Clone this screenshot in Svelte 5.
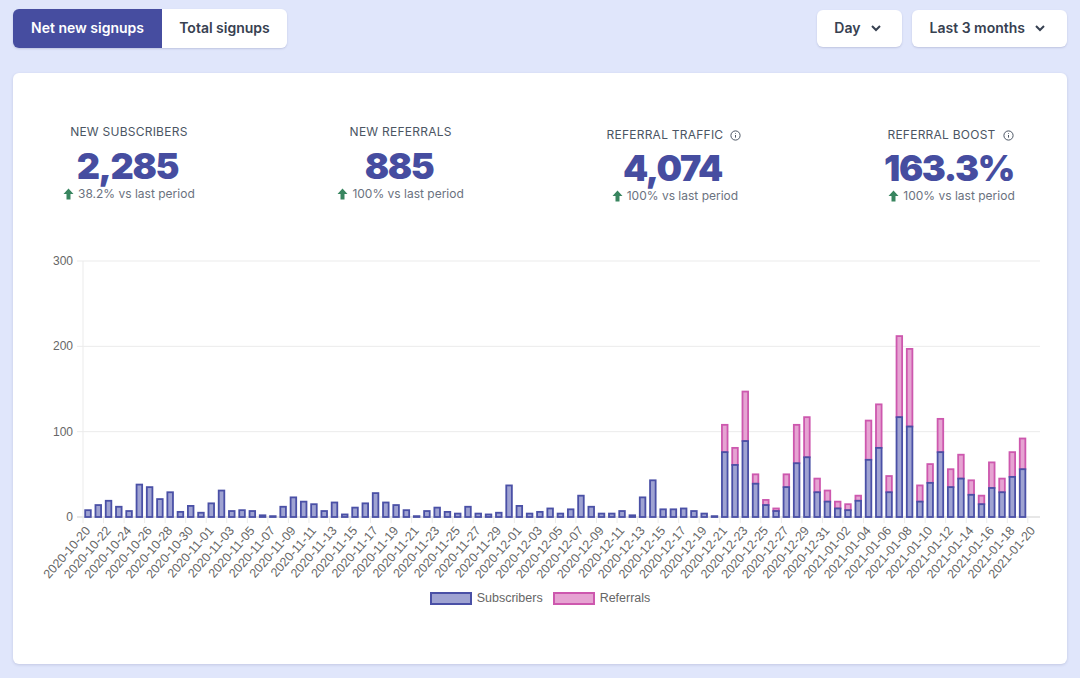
<script lang="ts">
  // chart geometry, in svg coordinates (svg starts at the card's left edge)
  const plotLeft = 70;
  const plotRight = 1027;
  const plotTop = 12;
  const plotBottom = 268;
  const step = 10.27;
  const barWidth = 5.6;
  const perUnit = (plotBottom - plotTop) / 300;

  const subscribers = [
    8, 14, 19, 12, 7, 38, 35, 21, 29, 6, 13, 5, 16, 31, 7, 8, 7, 2, 1, 12, 23, 18, 15, 7, 17, 3, 11, 16, 28, 17, 14, 8,
    1, 7, 11, 6, 4, 12, 4, 3, 5, 37, 13, 4, 6, 10, 4, 9, 25, 12, 4, 4, 7, 2, 23, 43, 9, 9, 10, 7, 4, 1,
    76, 61, 89, 39, 14, 7, 35, 63, 70, 29, 18, 10, 8, 19, 67, 81, 29, 117, 106, 18, 40, 76, 35, 45, 26, 15, 34, 29, 47, 56,
  ];

  // totals for the stretch of days that also have referrals, from index 62
  const totals = [
    108, 81, 147, 50, 20, 10, 50, 108, 117, 45, 31, 18, 15, 25, 113, 132, 48, 212, 197, 37, 62, 115, 56, 73, 43, 25, 64, 45, 76, 92,
  ];

  const y = (v: number) => plotBottom - v * perUnit;
  const barX = (i: number) => plotLeft + 5 + i * step - barWidth / 2;

  const bars = subscribers.map((sub, i) => ({
    x: barX(i),
    sub,
    total: i >= 62 ? totals[i - 62] : sub,
  }));

  function dayLabel(i: number) {
    const d = new Date(Date.UTC(2020, 9, 20 + i));
    return d.toISOString().slice(0, 10);
  }

  const ticks = Array.from({ length: 47 }, (_, k) => k * 2);

  const stats = [
    { label: "NEW SUBSCRIBERS", value: "2,285", delta: "38.2% vs last period", info: false },
    { label: "NEW REFERRALS", value: "885", delta: "100% vs last period", info: false },
    { label: "REFERRAL TRAFFIC", value: "4,074", delta: "100% vs last period", info: true },
    { label: "REFERRAL BOOST", value: "163.3%", delta: "100% vs last period", info: true },
  ];
</script>

<div class="page">
  <header class="toolbar">
    <div class="tabs">
      <button class="tab tab--active">Net new signups</button>
      <button class="tab">Total signups</button>
    </div>
    <div class="filters">
      <button class="select">
        Day
        <svg width="10" height="10" viewBox="0 0 10 10" aria-hidden="true"><path d="M1 3l4 4 4-4" /></svg>
      </button>
      <button class="select">
        Last 3 months
        <svg width="10" height="10" viewBox="0 0 10 10" aria-hidden="true"><path d="M1 3l4 4 4-4" /></svg>
      </button>
    </div>
  </header>

  <section class="card">
    <div class="stats">
      {#each stats as stat}
        <div class="stat" class:stat--info={stat.info}>
          <div class="stat__label">
            {stat.label}
            {#if stat.info}
              <svg class="info" width="11" height="11" viewBox="0 0 11 11" aria-hidden="true">
                <circle cx="5.5" cy="5.5" r="4.6" />
                <path d="M5.5 5v2.6M5.5 3.1v.7" />
              </svg>
            {/if}
          </div>
          <div class="stat__value">{stat.value}</div>
          <div class="stat__delta">
            <svg width="11" height="12" viewBox="0 0 11 12" aria-hidden="true"><path d="M5.5 0.5L10.5 6H7.5V11.5H3.5V6H0.5z" /></svg>
            {stat.delta}
          </div>
        </div>
      {/each}
    </div>

    <svg class="chart" width="1054" height="342" viewBox="0 0 1054 342">
      {#each [0, 100, 200, 300] as v}
        <line class={v === 0 ? "axis" : "grid"} x1={plotLeft - 6} x2={plotRight} y1={y(v)} y2={y(v)} />
        <text class="tick-y" x={plotLeft - 10} y={y(v) + 4}>{v}</text>
      {/each}
      <line class="grid" x1={plotLeft} x2={plotLeft} y1={plotTop} y2={plotBottom} />
      {#each ticks as k}
        <line class="grid" x1={plotLeft + k * step} x2={plotLeft + k * step} y1={plotBottom} y2={plotBottom + 6} />
        <text
          class="tick-x"
          transform="translate({plotLeft + 8 + k * step} {plotBottom + 14}) rotate(-49)"
        >{dayLabel(k)}</text>
      {/each}
      {#each bars as bar}
        {#if bar.total > bar.sub}
          <rect class="bar-ref" x={bar.x} y={y(bar.total)} width={barWidth} height={(bar.total - bar.sub) * perUnit} />
        {/if}
        <rect class="bar-sub" x={bar.x} y={y(bar.sub)} width={barWidth} height={bar.sub * perUnit} />
      {/each}
    </svg>

    <div class="legend">
      <span class="legend__item"><i class="swatch swatch--sub"></i>Subscribers</span>
      <span class="legend__item"><i class="swatch swatch--ref"></i>Referrals</span>
    </div>
  </section>
</div>

<style>
  :global(body) {
    margin: 0;
    background: #e0e6fb;
  }

  .page {
    height: 678px;
    box-sizing: border-box;
    padding: 9px 13px 14px;
    font-family: Inter, "Liberation Sans", sans-serif;
    overflow: hidden;
  }

  .toolbar {
    display: flex;
    justify-content: space-between;
    align-items: flex-start;
    height: 64px;
  }

  .tabs {
    display: flex;
    height: 39px;
    border-radius: 6px;
    box-shadow: 0 1px 2px rgba(60, 66, 120, 0.2);
  }

  button {
    font: inherit;
    font-size: 14px;
    font-weight: 600;
    line-height: 17px;
    color: #374151;
    background: #fff;
    border: 0;
    padding: 0;
    cursor: pointer;
  }

  .tab {
    height: 39px;
    width: 125px;
    padding-bottom: 2px;
    border-radius: 0 6px 6px 0;
  }

  .tab--active {
    width: 149px;
    color: #fff;
    background: #464da0;
    border-radius: 6px 0 0 6px;
  }

  .filters {
    display: flex;
    gap: 10px;
    margin-top: 1px;
  }

  .select {
    display: flex;
    align-items: center;
    gap: 10px;
    height: 37px;
    padding: 0 21px 2px 17px;
    border-radius: 6px;
    box-shadow: 0 1px 2px rgba(60, 66, 120, 0.2);
  }

  .select:last-child {
    padding: 0 22px 2px 18px;
  }

  .select path {
    fill: none;
    stroke: #374151;
    stroke-width: 2;
  }

  .card {
    height: 591px;
    background: #fff;
    border-radius: 6px;
    box-shadow: 0 1px 3px rgba(60, 66, 120, 0.18);
    overflow: hidden;
  }

  .stats {
    display: flex;
    justify-content: space-between;
    align-items: flex-start;
    height: 85px;
    padding: 51px 50px 0;
  }

  .stat {
    display: flex;
    flex-direction: column;
    align-items: center;
  }

  .stat--info {
    padding-top: 3px;
  }

  .stat--info .stat__value {
    margin-top: 9px;
  }

  .stat--info .stat__delta {
    padding-left: 2px;
  }

  .stat__label {
    display: flex;
    align-items: center;
    gap: 7px;
    height: 16px;
    font-size: 12px;
    letter-spacing: 0.02em;
    line-height: 16px;
    color: #4b5563;
  }

  .info circle,
  .info path {
    fill: none;
    stroke: #4b5563;
    stroke-width: 1;
  }

  .stat__value {
    margin-top: 10px;
    padding-right: 3px;
    font-size: 36px;
    font-weight: 900;
    letter-spacing: -1.4px;
    line-height: 32px;
    color: #464da0;
  }

  .stat__delta {
    display: flex;
    align-items: center;
    gap: 4px;
    margin-top: 4px;
    font-size: 12px;
    line-height: 16px;
    color: #6b7280;
  }

  .stat__delta path {
    fill: #38855f;
  }

  .chart {
    display: block;
    margin-top: 40px;
    font-family: "Liberation Sans", Arial, sans-serif;
  }

  .grid {
    stroke: #ebebeb;
    stroke-width: 1;
  }

  .axis {
    stroke: #cfcfcf;
    stroke-width: 1;
  }

  .tick-y {
    font-size: 12px;
    fill: #666;
    text-anchor: end;
  }

  .tick-x {
    font-size: 12.5px;
    fill: #666;
    text-anchor: end;
  }

  .bar-sub {
    fill: #9fa3d2;
    stroke: #4a50a6;
    stroke-width: 1.8;
  }

  .bar-ref {
    fill: #e6a3d2;
    stroke: #cd58ae;
    stroke-width: 1.8;
  }

  .legend {
    display: flex;
    justify-content: center;
    gap: 10px;
    font-family: "Liberation Sans", Arial, sans-serif;
    font-size: 12.5px;
    line-height: 14px;
    color: #666;
  }

  .legend__item {
    display: flex;
    align-items: center;
    gap: 5px;
  }

  .swatch {
    display: block;
    box-sizing: border-box;
    width: 42px;
    height: 13px;
    border: 2px solid;
  }

  .swatch--sub {
    background: #9fa3d2;
    border-color: #4a50a6;
  }

  .swatch--ref {
    background: #e6a3d2;
    border-color: #cd58ae;
  }
</style>
